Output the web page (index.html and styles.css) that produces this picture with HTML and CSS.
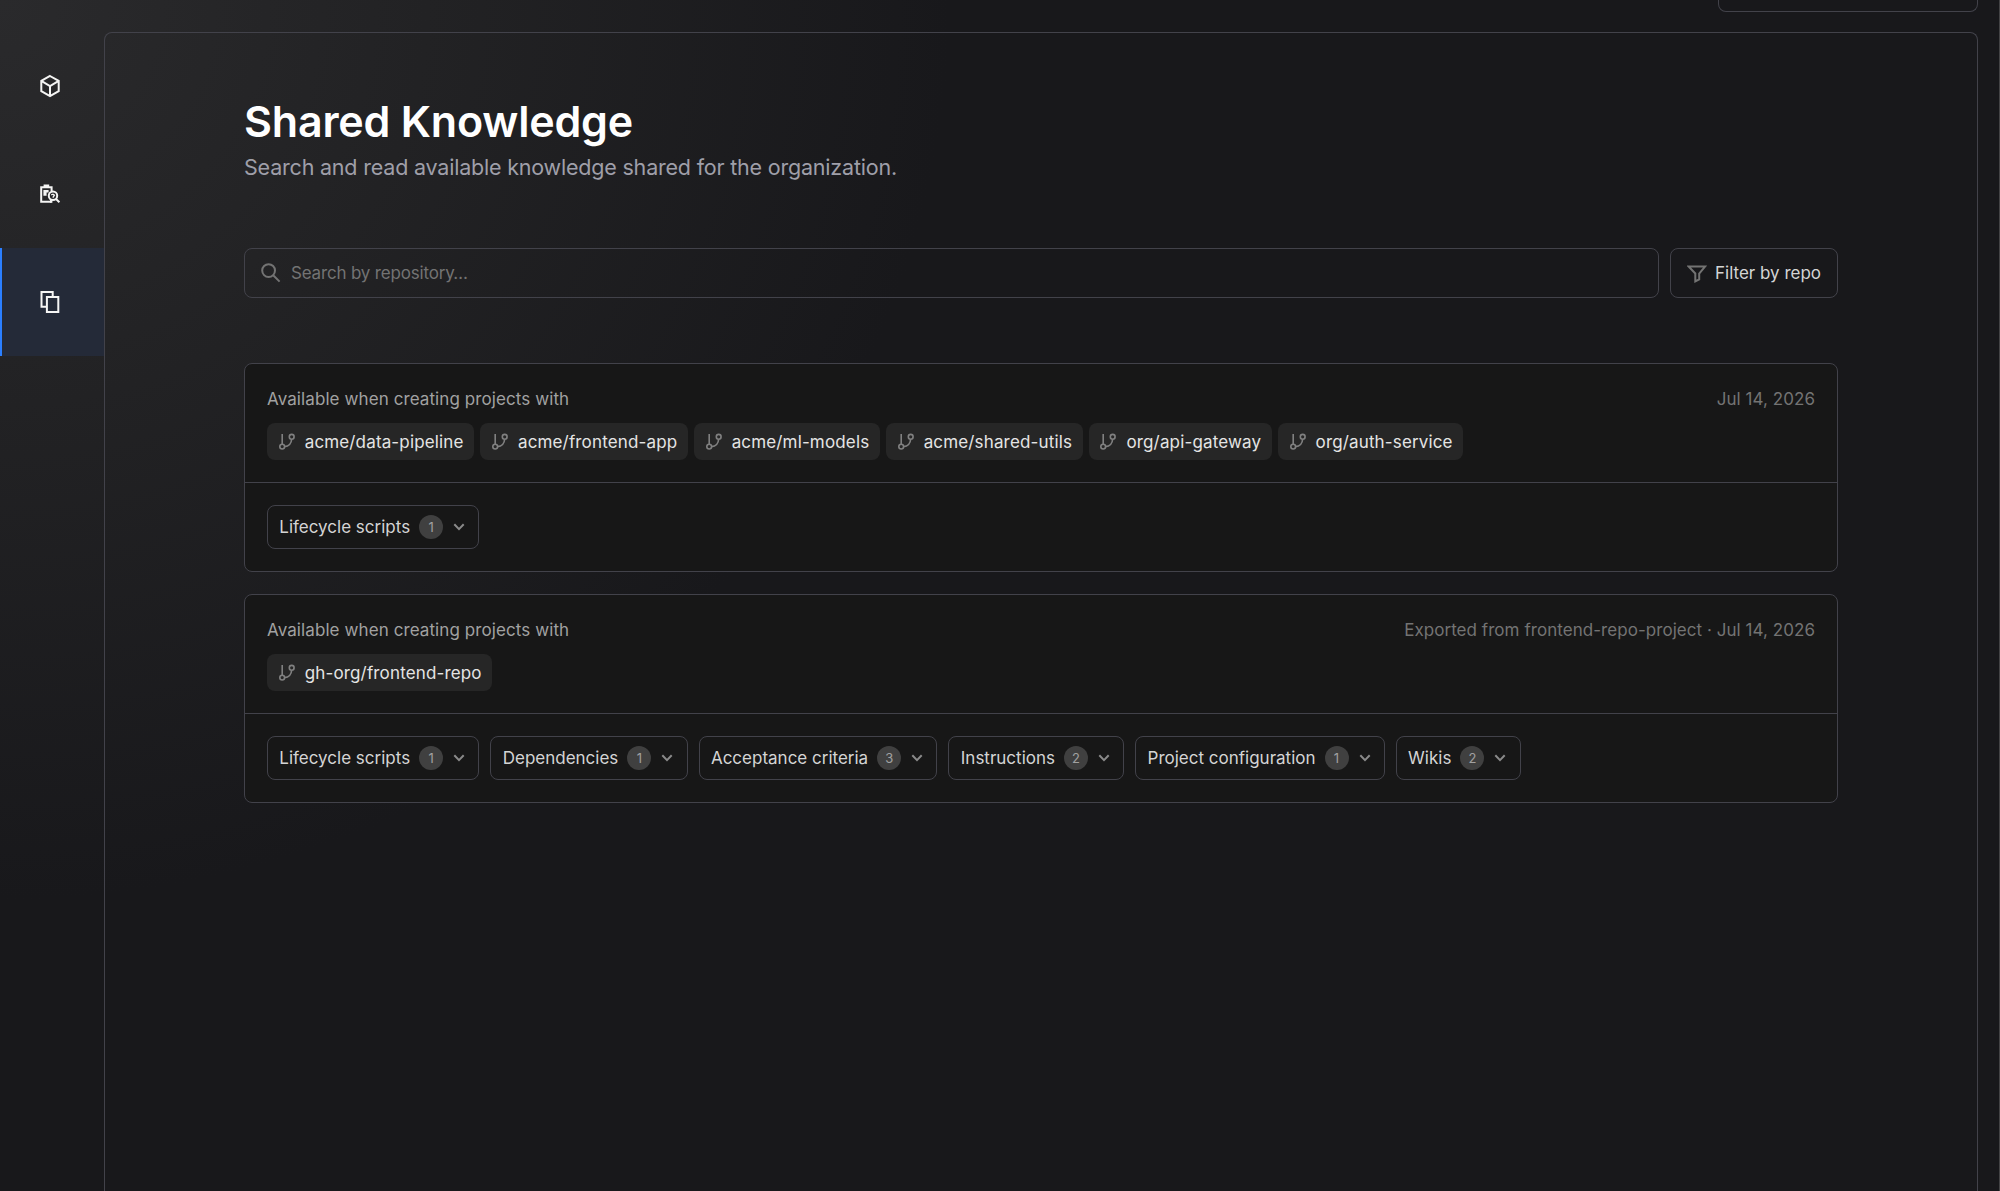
FILE: index.html
```html
<!DOCTYPE html>
<html lang="en">
<head>
  <meta charset="UTF-8">
  <title>Shared Knowledge</title>
  <link rel="stylesheet" href="styles.css">
</head>
<body>

<svg class="sprite" xmlns="http://www.w3.org/2000/svg">
  <symbol id="icon-branch" viewBox="0 0 16 17">
    <path d="M3.2 1v10.2M12.6 6.4c-.2 3.8-2.8 7-7 7.2" />
    <circle cx="3.2" cy="13.6" r="2.4" />
    <circle cx="12.7" cy="3.8" r="2.4" />
  </symbol>
  <symbol id="icon-chevron" viewBox="0 0 12 8">
    <path d="M1.3 1.3 6 6.1l4.7-4.8" />
  </symbol>
</svg>

<div class="app">
  <nav class="sidebar">
    <a class="nav-item" href="#" aria-label="Projects">
      <svg width="22" height="24" viewBox="0 0 22 24">
        <path d="M11 2 19.7 6.9v10.2L11 22 2.3 17.1V6.9zM2.3 6.9 11 12l8.7-5.1M11 12v10" />
      </svg>
    </a>
    <a class="nav-item" href="#" aria-label="Reviews">
      <svg width="22" height="20" viewBox="0 0 22 20">
        <path d="M12.5 17.8H2.2V3.2h10.4v4" />
        <path d="M4.6.6h5.6v3.4H4.6zM4.4 6h5.2v2.6H7.6v3.2H4.4zM11 15h2.4v3.8H11z" class="solid" />
        <circle cx="14" cy="11.8" r="4.2" />
        <path d="m12.2 10.8 1.8-.6 1.4 1-1.6 2.4" class="thin" />
        <path d="m17 15 3.4 3.3" />
      </svg>
    </a>
    <a class="nav-item active" href="#" aria-label="Shared knowledge">
      <svg width="22" height="24" viewBox="0 0 22 24">
        <path d="M7.9 6.9h11.4v15.2H7.9zM7.2 16.8H2.5V2h11.2v4.9" />
      </svg>
    </a>
  </nav>

  <div class="main">
    <div class="topbar"><div class="top-box"></div></div>

    <main class="panel">
      <h1>Shared Knowledge</h1>
      <p class="subtitle">Search and read available knowledge shared for the organization.</p>

      <div class="toolbar">
        <label class="search">
          <svg width="20" height="20" viewBox="0 0 20 20"><circle cx="7.6" cy="7.6" r="6.4" /><path d="m12.2 12.2 6.4 6.4" /></svg>
          <input type="text" placeholder="Search by repository…">
        </label>
        <button class="filter">
          <svg width="20" height="18" viewBox="0 0 20 18"><path d="M1.6 1.4h16.6l-6 7.1v5.9l-3.9 2V8.5z" /></svg>
          <span>Filter by repo</span>
        </button>
      </div>

      <section class="card">
        <div class="card-head">
          <div class="card-row">
            <span class="label">Available when creating projects with</span>
            <span class="meta">Jul 14, 2026</span>
          </div>
          <div class="chips">
            <span class="chip"><svg><use href="#icon-branch" /></svg>acme/data-pipeline</span>
            <span class="chip"><svg><use href="#icon-branch" /></svg>acme/frontend-app</span>
            <span class="chip"><svg><use href="#icon-branch" /></svg>acme/ml-models</span>
            <span class="chip"><svg><use href="#icon-branch" /></svg>acme/shared-utils</span>
            <span class="chip"><svg><use href="#icon-branch" /></svg>org/api-gateway</span>
            <span class="chip"><svg><use href="#icon-branch" /></svg>org/auth-service</span>
          </div>
        </div>
        <div class="card-body">
          <button class="group">Lifecycle scripts<b>1</b><svg><use href="#icon-chevron" /></svg></button>
        </div>
      </section>

      <section class="card">
        <div class="card-head">
          <div class="card-row">
            <span class="label">Available when creating projects with</span>
            <span class="meta">Exported from frontend-repo-project · Jul 14, 2026</span>
          </div>
          <div class="chips">
            <span class="chip"><svg><use href="#icon-branch" /></svg>gh-org/frontend-repo</span>
          </div>
        </div>
        <div class="card-body">
          <button class="group">Lifecycle scripts<b>1</b><svg><use href="#icon-chevron" /></svg></button>
          <button class="group">Dependencies<b>1</b><svg><use href="#icon-chevron" /></svg></button>
          <button class="group">Acceptance criteria<b>3</b><svg><use href="#icon-chevron" /></svg></button>
          <button class="group">Instructions<b>2</b><svg><use href="#icon-chevron" /></svg></button>
          <button class="group">Project configuration<b>1</b><svg><use href="#icon-chevron" /></svg></button>
          <button class="group">Wikis<b>2</b><svg><use href="#icon-chevron" /></svg></button>
        </div>
      </section>
    </main>
  </div>
</div>

</body>
</html>
```
FILE: styles.css
```css
* {
  box-sizing: border-box;
}
body {
  margin: 0;
  height: 1191px;
  overflow: hidden;
  font-family: Inter, "Liberation Sans", sans-serif;
  font-size: 17px;
  color: #e4e4e4;
  background: #18181a;
}
button, input {
  font: inherit;
}
svg {
  fill: none;
  stroke: currentColor;
  stroke-width: 2;
  flex: none;
}
.sprite {
  display: none;
}
.app {
  display: flex;
  height: 1191px;
  border-right: 1px solid #434345;
  background: radial-gradient(ellipse 950px 900px at 0 0, #2a2a2c 0%, #222224 45%, #18181b 100%);
}

/* sidebar */
.sidebar {
  width: 104px;
  padding-top: 32px;
}
.nav-item {
  display: flex;
  align-items: center;
  height: 108px;
  padding-left: 39px;
  color: #f5f5f4;
}
.nav-item .solid {
  fill: currentColor;
  stroke: none;
}
.nav-item .thin {
  stroke-width: 1.4;
}
.nav-item.active {
  padding-left: 37px;
  border-left: 2px solid #2b7fff;
  background: #242a38;
}

/* main */
.main {
  flex: 1;
  display: flex;
  flex-direction: column;
  padding-right: 21px;
}
.topbar {
  height: 32px;
  display: flex;
  justify-content: flex-end;
}
.top-box {
  width: 260px;
  height: 12px;
  border: 1px solid #42424a;
  border-top: none;
  border-radius: 0 0 8px 8px;
}
.panel {
  flex: 1;
  padding: 61px 139px 0;
  border: 1px solid #42424a;
  border-bottom: none;
  border-radius: 8px 8px 0 0;
}
h1 {
  margin: 0;
  font-size: 43px;
  line-height: 54px;
  font-weight: 600;
  letter-spacing: -0.2px;
  color: #fff;
}
.subtitle {
  margin: 3px 0 0;
  font-size: 21.5px;
  line-height: 32px;
  letter-spacing: -0.2px;
  color: #9f9fa9;
}
.toolbar {
  display: flex;
  gap: 11px;
  margin-top: 65px;
}
.search {
  flex: 1;
  display: flex;
  align-items: center;
  gap: 10px;
  height: 50px;
  padding: 0 16px;
  border: 1px solid #42424a;
  border-radius: 8px;
  color: #737373;
}
.search input {
  flex: 1;
  padding: 0;
  border: none;
  background: none;
  color: #e4e4e4;
  outline: none;
  letter-spacing: -0.18px;
}
.search input::placeholder {
  color: #737373;
}
.filter {
  display: flex;
  align-items: center;
  gap: 8px;
  width: 168px;
  padding: 0 16px;
  border: 1px solid #42424a;
  border-radius: 8px;
  background: none;
  color: #d4d4d4;
  white-space: nowrap;
}
.filter svg {
  margin-top: 2px;
  color: #737373;
}

/* cards */
.card {
  margin-top: 22px;
  border: 1px solid #42424a;
  border-radius: 8px;
  background: #171717;
}
.toolbar + .card {
  margin-top: 65px;
}
.card-head {
  padding: 22px;
  border-bottom: 1px solid #42424a;
}
.card-row {
  display: flex;
  justify-content: space-between;
  line-height: 26px;
}
.label {
  letter-spacing: 0.09px;
  color: #a1a1a1;
}
.meta {
  letter-spacing: 0.05px;
  color: #737373;
}
.chips {
  display: flex;
  gap: 6px;
  margin-top: 11px;
}
.chip {
  display: flex;
  align-items: center;
  gap: 10px;
  height: 37px;
  padding: 0 10.7px 0 11.7px;
  border-radius: 8px;
  background: #262626;
  letter-spacing: 0.15px;
  white-space: nowrap;
}
.chip svg {
  width: 16px;
  height: 17px;
  color: #808080;
  stroke-width: 1.6;
}
.card-body {
  display: flex;
  gap: 11px;
  padding: 22px;
}
.group {
  display: flex;
  align-items: center;
  height: 44px;
  padding: 0 13.3px 0 11.3px;
  border: 1px solid #42424a;
  border-radius: 8px;
  background: none;
  color: #d4d4d4;
  white-space: nowrap;
}
.group b {
  width: 24px;
  height: 24px;
  margin: 0 10px 0 9px;
  border-radius: 50%;
  background: #404040;
  color: #a1a1a1;
  font-size: 13px;
  font-weight: 400;
  line-height: 24px;
  text-align: center;
}
.group svg {
  width: 12px;
  height: 8px;
  color: #8a8a8a;
}
```
